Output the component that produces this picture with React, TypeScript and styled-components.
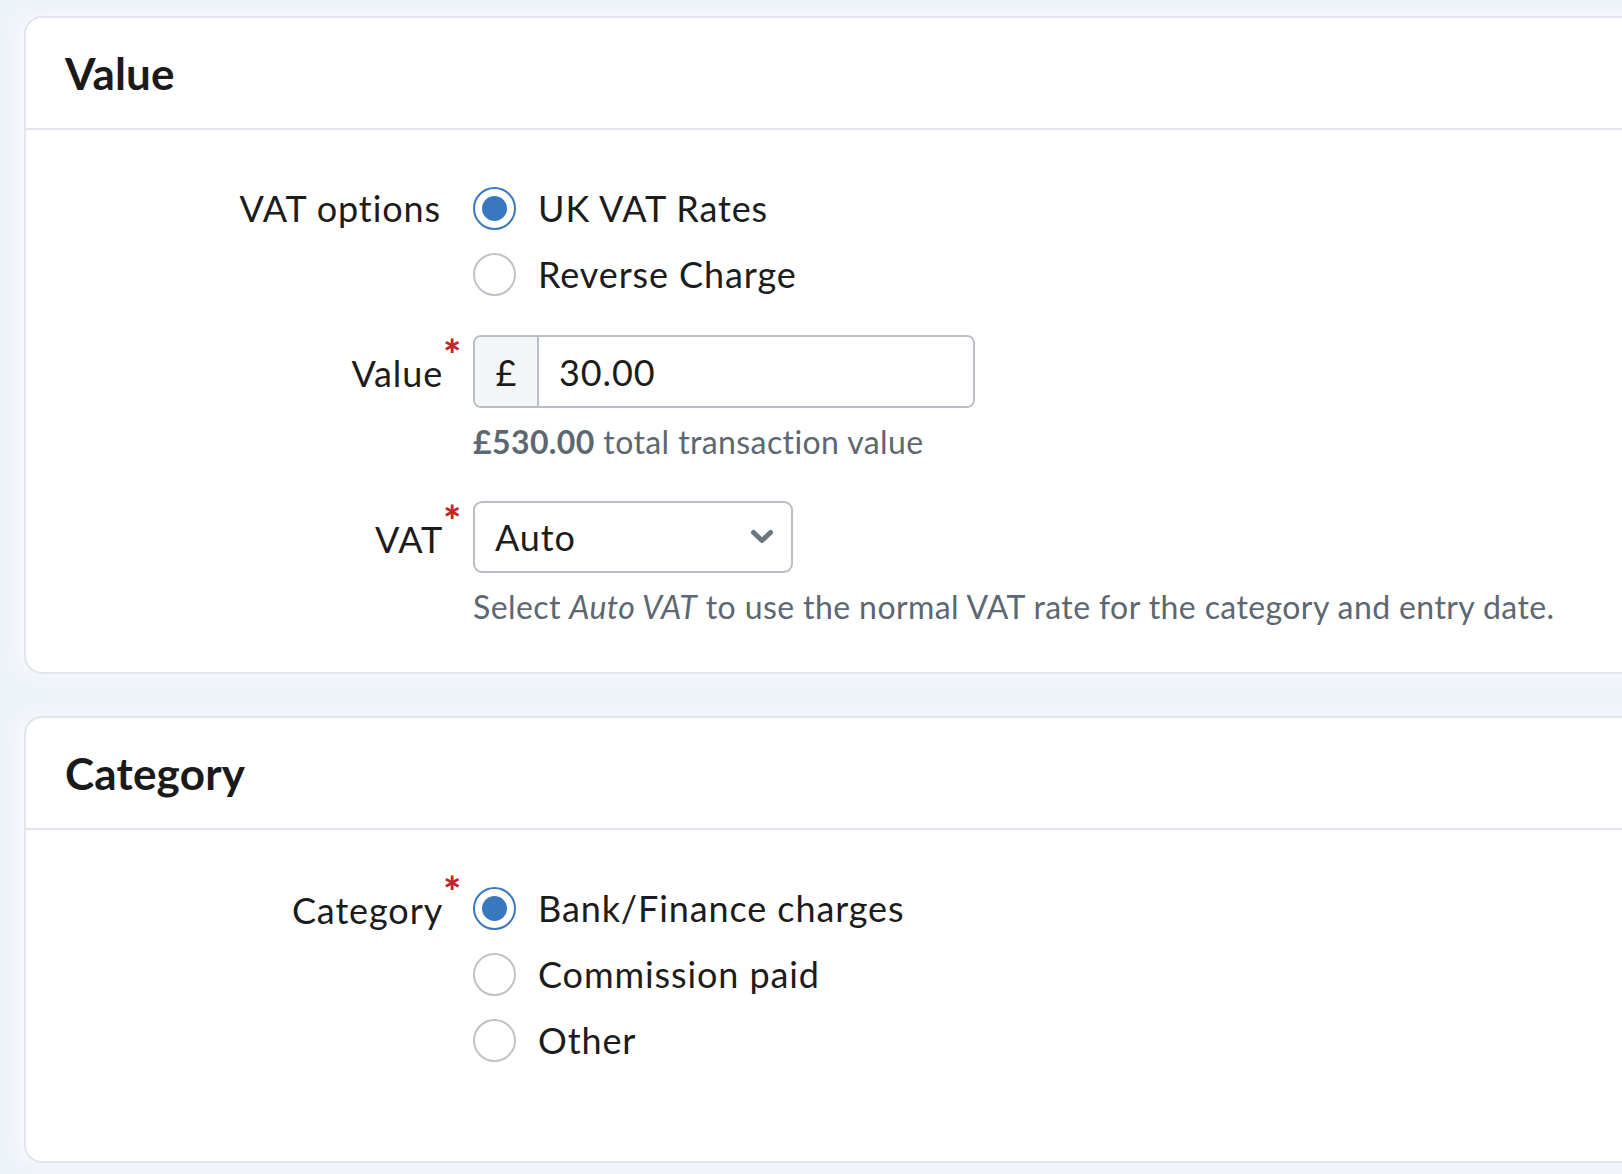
import React from "react"
import styled, { createGlobalStyle } from "styled-components"

const GlobalStyle = createGlobalStyle`
  html, body {
    margin: 0;
    padding: 0;
    background: #eef3fa;
    overflow: hidden;
  }
  body {
    font-family: "Lato", "Noto Sans", sans-serif;
    color: #1c1c1c;
  }
`

const Page = styled.div`
  min-height: 100vh;
  padding: 16px 0 0 24px;
  display: flex;
  flex-direction: column;
  gap: 42px;
  box-sizing: border-box;
`

const Card = styled.section`
  width: 1660px;
  background: #ffffff;
  border: 2px solid #e2e5eb;
  border-radius: 18px;
  box-shadow: -6px 0 18px rgba(255, 255, 255, 0.6);
`

const CardHeader = styled.header`
  height: 110px;
  display: flex;
  align-items: center;
  padding: 0 39px;
  border-bottom: 2px solid #e2e5eb;
`

const CardTitle = styled.h2`
  margin: 0;
  font-size: 44px;
  font-weight: 700;
  color: #1a1a1a;
  letter-spacing: 0.2px;
`

const CardBody = styled.div<{ $padTop: number; $padBottom: number }>`
  padding: ${(p) => p.$padTop}px 0 ${(p) => p.$padBottom}px;
  display: flex;
  flex-direction: column;
  gap: 28px;
`

const Field = styled.div`
  display: grid;
  grid-template-columns: 415px 1fr;
  column-gap: 32px;
  align-items: start;
`

const Label = styled.label<{ $lineHeight: number }>`
  text-align: right;
  font-size: 36px;
  letter-spacing: 0.9px;
  line-height: ${(p) => p.$lineHeight}px;
  color: #1c1c1c;
  white-space: nowrap;
`

const Required = styled.span`
  position: relative;
  top: -17px;
  margin-right: -20px;
  margin-left: 0;
  font-size: 42px;
  font-weight: 900;
  letter-spacing: 0;
  color: #c0272d;
`

const Control = styled.div`
  display: flex;
  flex-direction: column;
  align-items: flex-start;
`

const RadioOption = styled.label`
  display: flex;
  align-items: center;
  gap: 22px;
  height: 66px;
  font-size: 36px;
  letter-spacing: 0.9px;
  line-height: 66px;
  color: #1c1c1c;
  cursor: pointer;
`

const RadioCircle = styled.span<{ $checked: boolean }>`
  width: 43px;
  height: 43px;
  box-sizing: border-box;
  border-radius: 50%;
  border: 2px solid ${(p) => (p.$checked ? "#3a78c0" : "#bfc3c8")};
  display: flex;
  align-items: center;
  justify-content: center;
  background: #fff;
  flex-shrink: 0;

  &::after {
    content: "";
    width: 25px;
    height: 25px;
    border-radius: 50%;
    background: #3778bf;
    display: ${(p) => (p.$checked ? "block" : "none")};
  }
`

const InputGroup = styled.div`
  display: flex;
  width: 502px;
  height: 73px;
  box-sizing: border-box;
  border: 2px solid #b9bec4;
  border-radius: 8px;
  overflow: hidden;
`

const Addon = styled.span`
  flex: 0 0 62px;
  display: flex;
  align-items: center;
  justify-content: center;
  background: #f4f5f7;
  border-right: 2px solid #b9bec4;
  font-size: 36px;
  color: #1c1c1c;
`

const TextInput = styled.input`
  flex: 1 1 auto;
  min-width: 0;
  border: none;
  outline: none;
  padding: 0 20px;
  font-family: inherit;
  font-size: 36px;
  letter-spacing: 0.9px;
  color: #1c1c1c;
  background: #fff;
`

const Select = styled.div`
  width: 320px;
  height: 72px;
  box-sizing: border-box;
  border: 2px solid #b9bec4;
  border-radius: 9px;
  display: flex;
  align-items: center;
  justify-content: space-between;
  padding: 0 17px 0 20px;
  font-size: 36px;
  letter-spacing: 0.9px;
  color: #1c1c1c;
`

const Hint = styled.p`
  margin: 10px 0 7px;
  font-size: 32px;
  letter-spacing: 0.4px;
  line-height: 48px;
  color: #5d6772;
  white-space: nowrap;

  strong {
    font-weight: 700;
  }

  em {
    font-style: italic;
  }
`

const Chevron = () => (
  <svg width="24" height="16" viewBox="0 0 24 16" fill="none">
    <path d="M3.5 3.5 L12 11.5 L20.5 3.5" stroke="#6c7780" strokeWidth="5" strokeLinecap="round" strokeLinejoin="round" />
  </svg>
)

interface RadioProps {
  label: string
  checked?: boolean
}

const Radio: React.FC<RadioProps> = ({ label, checked = false }) => (
  <RadioOption>
    <RadioCircle $checked={checked} />
    {label}
  </RadioOption>
)

export default function App() {
  return (
    <>
      <GlobalStyle />
      <Page>
        <Card>
          <CardHeader>
            <CardTitle>Value</CardTitle>
          </CardHeader>
          <CardBody $padTop={45} $padBottom={34}>
            <Field>
              <Label $lineHeight={66}>VAT options</Label>
              <Control>
                <Radio label="UK VAT Rates" checked />
                <Radio label="Reverse Charge" />
              </Control>
            </Field>
            <Field>
              <Label $lineHeight={73}>
                Value<Required>*</Required>
              </Label>
              <Control>
                <InputGroup>
                  <Addon>£</Addon>
                  <TextInput defaultValue="30.00" />
                </InputGroup>
                <Hint>
                  <strong>£530.00</strong> total transaction value
                </Hint>
              </Control>
            </Field>
            <Field>
              <Label $lineHeight={72}>
                VAT<Required>*</Required>
              </Label>
              <Control>
                <Select>
                  Auto
                  <Chevron />
                </Select>
                <Hint>
                  Select <em>Auto VAT</em> to use the normal VAT rate for the category and entry date.
                </Hint>
              </Control>
            </Field>
          </CardBody>
        </Card>
        <Card>
          <CardHeader>
            <CardTitle>Category</CardTitle>
          </CardHeader>
          <CardBody $padTop={45} $padBottom={88}>
            <Field>
              <Label $lineHeight={66}>
                Category<Required>*</Required>
              </Label>
              <Control>
                <Radio label="Bank/Finance charges" checked />
                <Radio label="Commission paid" />
                <Radio label="Other" />
              </Control>
            </Field>
          </CardBody>
        </Card>
      </Page>
    </>
  )
}
